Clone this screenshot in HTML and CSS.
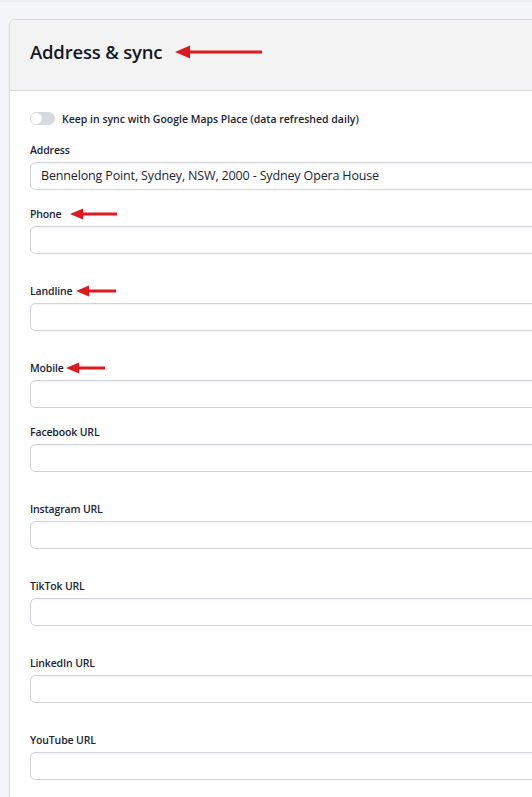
FILE: index.html
```html
<!DOCTYPE html>
<html lang="en">
<head>
<meta charset="utf-8">
<title>Address &amp; sync</title>
<link rel="stylesheet" href="styles.css">
</head>
<body>
<div class="topbar"></div>
<main class="page">
  <section class="card">
    <header class="card-header">
      <h2 class="card-title">Address &amp; sync</h2>
      <svg class="arrow arrow-title" width="87" height="14" viewBox="0 0 87 14"><polygon points="0,7 15,0.5 15,5.5 87,5.5 87,8.5 15,8.5 15,13.5" fill="#e0191f"/></svg>
    </header>
    <div class="card-body">
      <div class="toggle-row">
        <span class="toggle"><span class="knob"></span></span>
        <span class="toggle-label">Keep in sync with Google Maps Place (data refreshed daily)</span>
      </div>

      <div class="field">
        <label class="label">Address</label>
        <div class="input">Bennelong Point, Sydney, NSW, 2000 - Sydney Opera House</div>
      </div>
      <div class="field field-wide">
        <label class="label">Phone<svg class="arrow arrow-phone" width="47" height="12" viewBox="0 0 47 12"><polygon points="0,6 13,0.5 13,4.6 47,4.6 47,7.4 13,7.4 13,11.5" fill="#e0191f"/></svg></label>
        <div class="input"></div>
      </div>
      <div class="field field-wide">
        <label class="label">Landline<svg class="arrow arrow-landline" width="40" height="12" viewBox="0 0 40 12"><polygon points="0,6 13,0.5 13,4.6 40,4.6 40,7.4 13,7.4 13,11.5" fill="#e0191f"/></svg></label>
        <div class="input"></div>
      </div>
      <div class="field">
        <label class="label">Mobile<svg class="arrow arrow-mobile" width="39" height="12" viewBox="0 0 39 12"><polygon points="0,6 13,0.5 13,4.6 39,4.6 39,7.4 13,7.4 13,11.5" fill="#e0191f"/></svg></label>
        <div class="input"></div>
      </div>
      <div class="field field-wide">
        <label class="label">Facebook URL</label>
        <div class="input"></div>
      </div>
      <div class="field field-wide">
        <label class="label">Instagram URL</label>
        <div class="input"></div>
      </div>
      <div class="field field-wide">
        <label class="label">TikTok URL</label>
        <div class="input"></div>
      </div>
      <div class="field field-wide">
        <label class="label">LinkedIn URL</label>
        <div class="input"></div>
      </div>
      <div class="field field-wide">
        <label class="label">YouTube URL</label>
        <div class="input"></div>
      </div>
    </div>
  </section>
</main>
</body>
</html>
```

FILE: styles.css
```css
html, body {
  margin: 0;
  padding: 0;
  overflow: hidden;
}
body {
  background: #f4f5f9;
  font-family: "Open Sans", "Noto Sans", sans-serif;
  color: #1b2333;
  width: 532px;
  height: 797px;
}
.topbar {
  height: 2px;
  background: #eaecf0;
}
.page {
  padding: 17px 0 0 9px;
}
.card {
  width: 720px;
  background: #ffffff;
  border: 1px solid #d4d6db;
  border-radius: 6px;
  overflow: hidden;
}
.card-header {
  display: flex;
  align-items: center;
  height: 71px;
  box-sizing: border-box;
  padding: 0 0 6px 20px;
  background: #f3f3f3;
  border-bottom: 1px solid #d4d6db;
}
.card-title {
  margin: 0;
  font-size: 18.5px;
  font-weight: 600;
  letter-spacing: -0.2px;
  line-height: 24px;
  color: #111827;
}
.arrow {
  display: inline-block;
  flex: none;
}
.arrow-title {
  margin-left: 13px;
}
.card-body {
  padding: 19px 20px 20px 20px;
}
.toggle-row {
  display: flex;
  align-items: center;
  height: 17px;
  margin-bottom: 15px;
}
.toggle {
  position: relative;
  width: 25px;
  height: 13px;
  border-radius: 7px;
  background: #d6d9de;
  margin-right: 7px;
}
.knob {
  position: absolute;
  left: 1px;
  top: 1px;
  width: 11px;
  height: 11px;
  border-radius: 50%;
  background: #ffffff;
}
.toggle-label {
  font-size: 10.5px;
  font-weight: 600;
  line-height: 16px;
}
.field {
  margin-bottom: 16px;
}
.field-wide {
  margin-bottom: 29px;
}
.label {
  display: flex;
  align-items: center;
  font-size: 10.5px;
  font-weight: 600;
  letter-spacing: -0.15px;
  line-height: 16px;
  height: 16px;
  margin-bottom: 4px;
}
.arrow-phone { margin-left: 8px; }
.arrow-landline { margin-left: 4px; }
.arrow-mobile { margin-left: 2px; }
.input {
  box-sizing: border-box;
  height: 28px;
  border: 1px solid #d1d5db;
  border-radius: 5px;
  box-shadow: inset 0 1px 2px rgba(0, 0, 0, 0.05);
  padding: 0 10px;
  font-size: 12.5px;
  letter-spacing: -0.15px;
  line-height: 26px;
  color: #1b2333;
  white-space: nowrap;
}
```
